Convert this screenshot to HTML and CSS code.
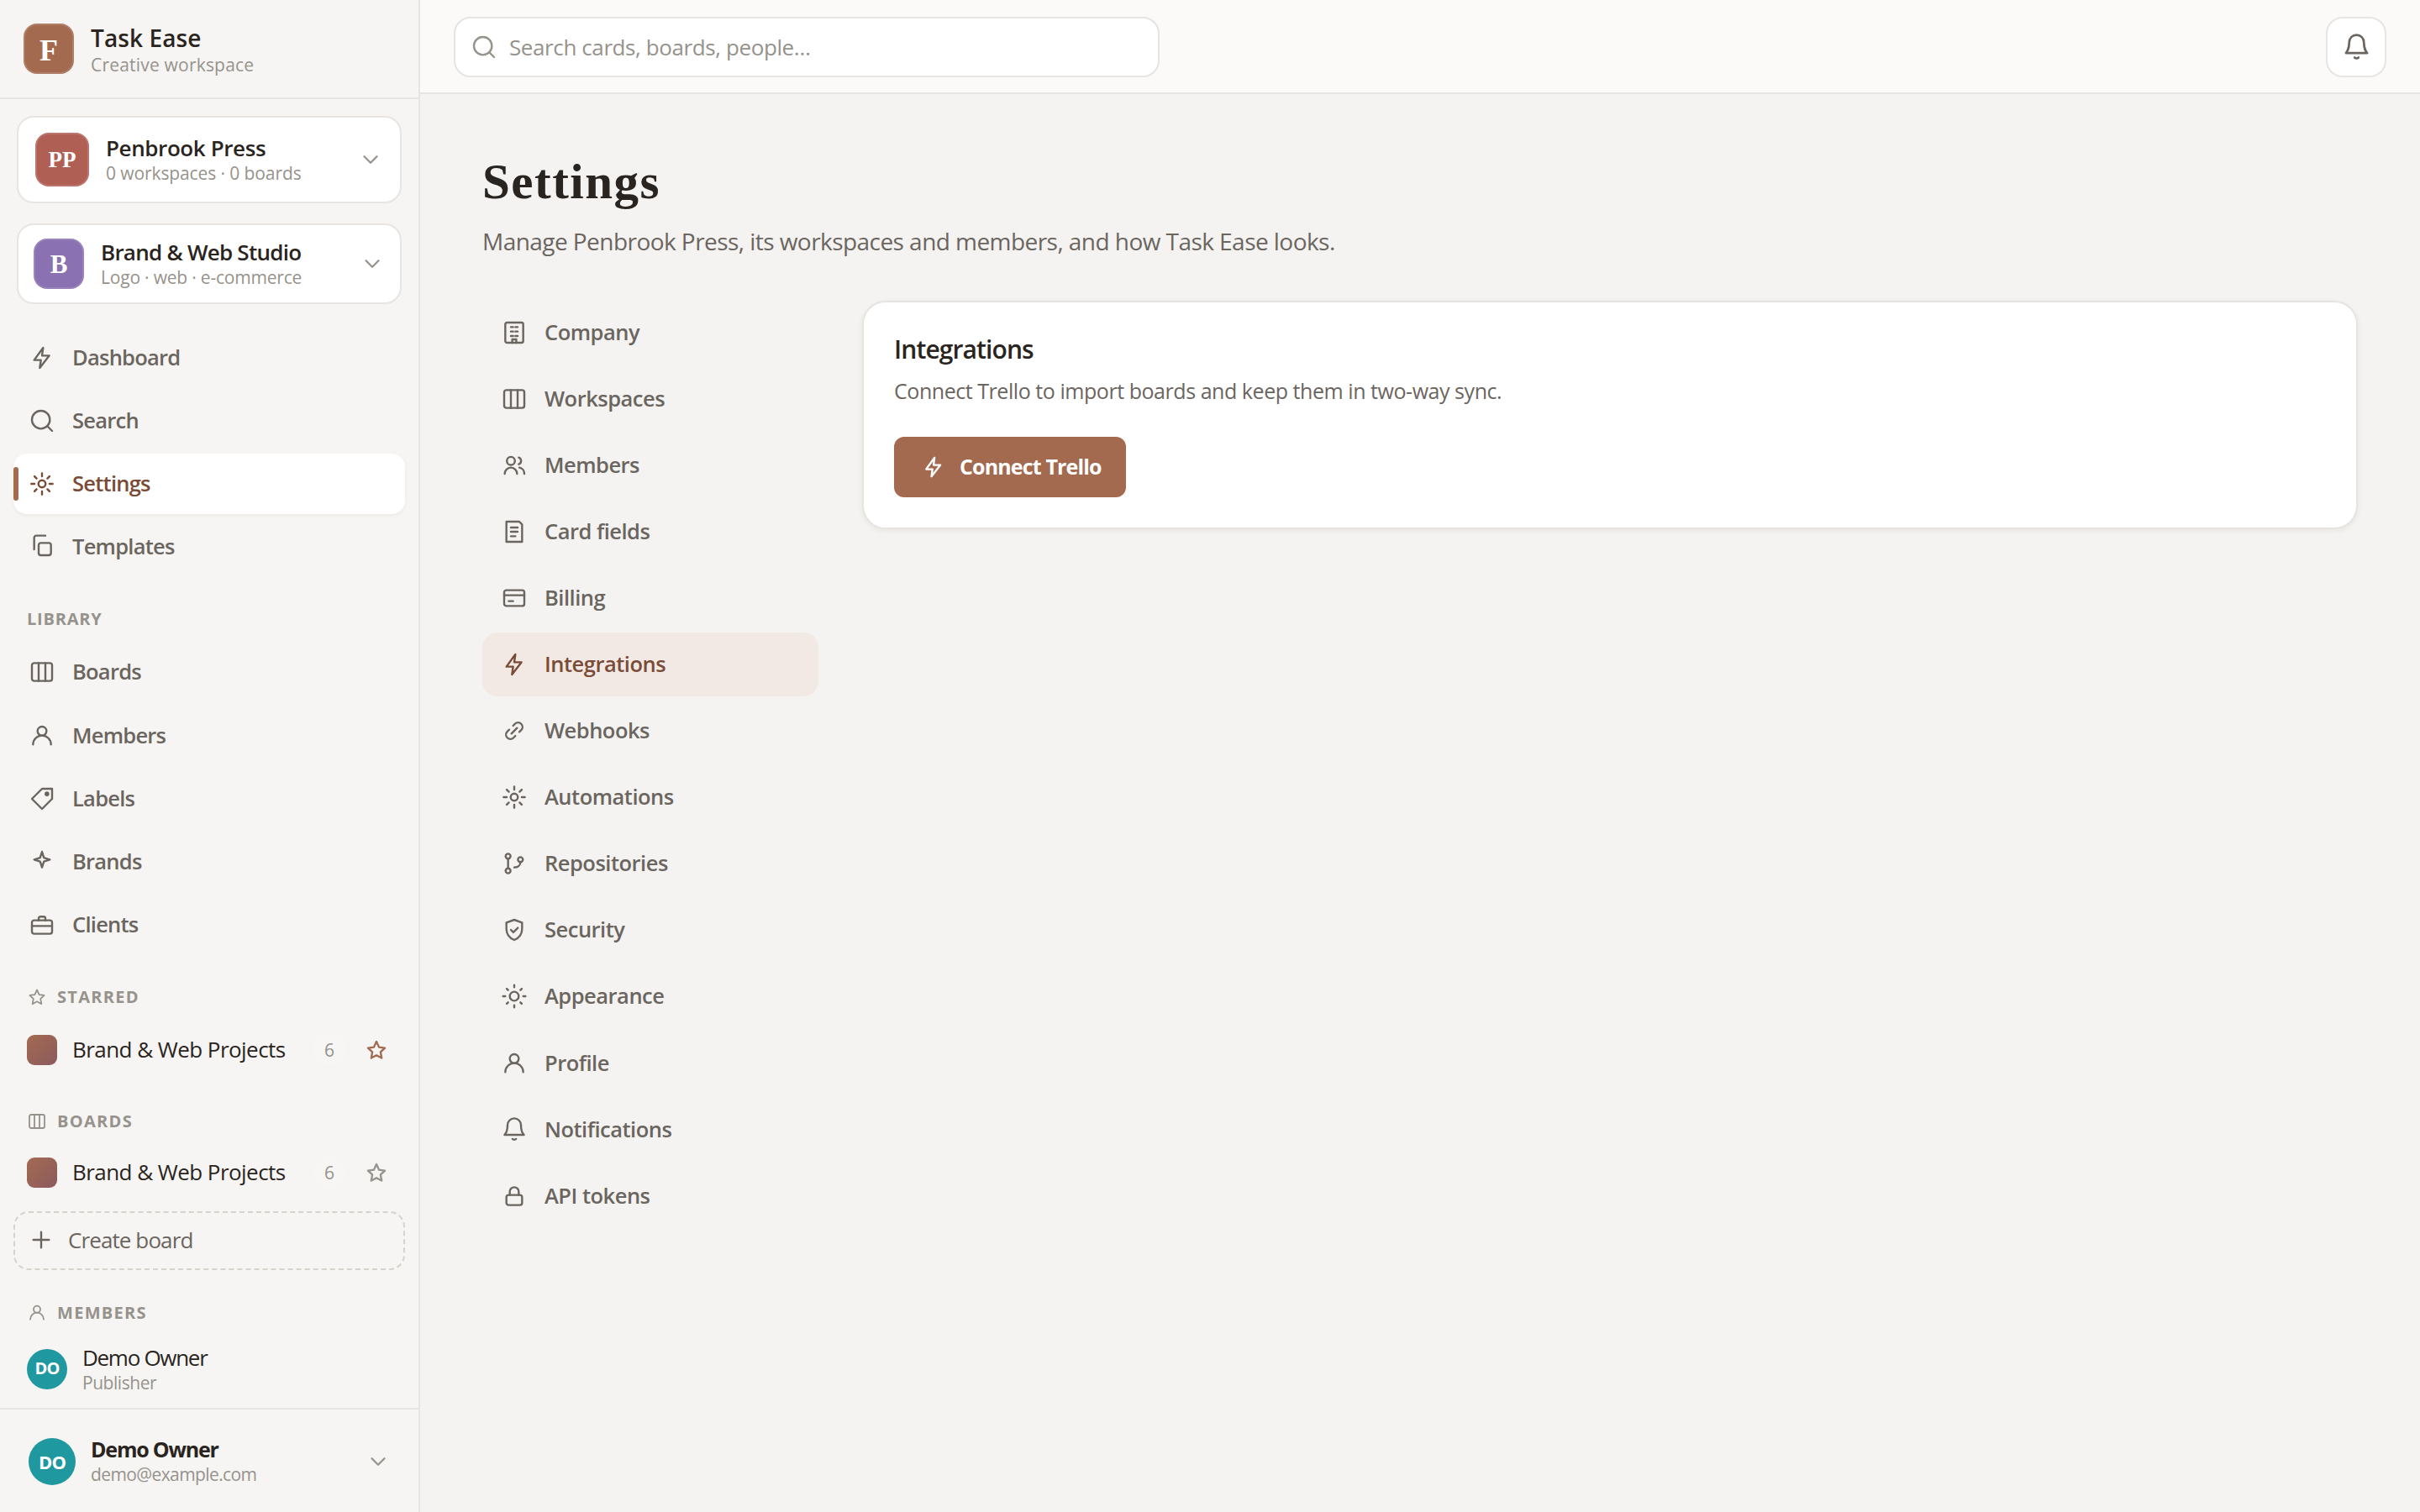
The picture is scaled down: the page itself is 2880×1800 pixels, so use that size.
FILE: index.html
```html
<!DOCTYPE html>
<html lang="en">
<head>
  <meta charset="UTF-8">
  <title>Settings - Task Ease</title>
  <link rel="stylesheet" href="styles.css">
</head>
<body>
  <svg class="sprite">
    <symbol id="bolt" viewBox="0 0 24 24"><path d="M13 3L5 14h6l-1 7 8.5-11H12z"/></symbol>
    <symbol id="search" viewBox="0 0 24 24"><circle cx="11" cy="11" r="8"/><path d="M21 21l-4.3-4.3"/></symbol>
    <symbol id="gear" viewBox="0 0 24 24"><circle cx="12" cy="12" r="3.2"/><path d="M12 2.5v2.8M12 18.7v2.8M2.5 12h2.8M18.7 12h2.8M5.3 5.3l1.9 1.9M16.8 16.8l1.9 1.9M18.7 5.3l-1.9 1.9M7.2 16.8l-1.9 1.9"/></symbol>
    <symbol id="copy" viewBox="0 0 24 24"><rect x="9" y="8.5" width="11" height="11" rx="2"/><path d="M5 14.3V4a2 2 0 0 1 2-2h8"/></symbol>
    <symbol id="board" viewBox="0 0 24 24"><rect x="3" y="4" width="18" height="16" rx="2"/><path d="M9 4v16M15 4v16"/></symbol>
    <symbol id="user" viewBox="0 0 24 24"><circle cx="12" cy="7.7" r="4"/><path d="M4 19.7a8 8 0 0 1 16 0"/></symbol>
    <symbol id="users" viewBox="0 0 24 24"><circle cx="9" cy="8" r="3.6"/><path d="M3.5 19.5a5.5 5.5 0 0 1 11 0M16 5a3.2 3.2 0 0 1 0 6M16.6 14a5.5 5.5 0 0 1 4.4 5.5"/></symbol>
    <symbol id="tag" viewBox="0 0 24 24"><path d="M12 3h9v9l-9 9-9-9z"/><circle cx="16.4" cy="7.6" r="1.2" fill="currentColor"/></symbol>
    <symbol id="sparkle" viewBox="0 0 24 24"><path d="M12 3l1.7 5.3L19 10l-5.3 1.7L12 17l-1.7-5.3L5 10l5.3-1.7z"/></symbol>
    <symbol id="briefcase" viewBox="0 0 24 24"><rect x="3" y="8" width="18" height="12" rx="2"/><path d="M9 8V6.2a1.5 1.5 0 0 1 1.5-1.5h3A1.5 1.5 0 0 1 15 6.200V8M3 13h18"/></symbol>
    <symbol id="star" viewBox="0 0 24 24"><path d="M12 3.500l2.600 5.600 6 .800-4.400 4.200 1.100 6.100L12 17.300l-5.300 2.900 1.100-6.100L3.400 9.900l6-.800z"/></symbol>
    <symbol id="plus" viewBox="0 0 24 24"><path d="M12 5v14M5 12h14"/></symbol>
    <symbol id="chevron" viewBox="0 0 24 24"><path d="M6 9l6 6 6-6"/></symbol>
    <symbol id="bell" viewBox="0 0 24 24"><path d="M6 7.800a6 6 0 0 1 12 0c0 6 2.700 8.700 2.700 8.700H3.300S6 13.800 6 7.800zM10.400 20.200a2 1.500 0 0 0 3.200 0"/></symbol>
    <symbol id="building" viewBox="0 0 24 24"><rect x="4" y="3" width="16" height="18" rx="1.500"/><path d="M9 7h2M13 7h2M9 11h2M13 11h2M9 15h2M13 15h2M10.200 21v-3h3.600v3"/></symbol>
    <symbol id="form" viewBox="0 0 24 24"><path d="M5 3h11.500L19 5.500V21H5zM9 8.200h6M9 12h6M9 16h4"/></symbol>
    <symbol id="credit" viewBox="0 0 24 24"><rect x="3" y="5" width="18" height="14" rx="2"/><path d="M3 9.500h18M7 14.700h4"/></symbol>
    <symbol id="link" viewBox="0 0 24 24"><path d="M9.500 14.500l5-5M11 7.500l1.600-1.700a3.900 3.900 0 0 1 5.600 5.600L16.500 13M7.500 11l-1.700 1.600a3.900 3.900 0 0 0 5.600 5.600L13 16.500"/></symbol>
    <symbol id="branch" viewBox="0 0 24 24"><circle cx="6.500" cy="5.500" r="2.200"/><circle cx="6.500" cy="18.500" r="2.200"/><circle cx="17.500" cy="8.500" r="2.200"/><path d="M6.500 7.700v8.600M17.500 10.700c0 3-2.500 4.800-5.500 4.800"/></symbol>
    <symbol id="shield" viewBox="0 0 24 24"><path d="M12 3l7 2.500V11c0 4.800-2.800 8.200-7 10-4.200-1.800-7-5.200-7-10V5.500zM9 12l2.200 2.200 4-4"/></symbol>
    <symbol id="sun" viewBox="0 0 24 24"><circle cx="12" cy="12" r="4"/><path d="M12 2v2M12 20v2M2 12h2M20 12h2M5.300 5.300l1.200 1.200M17.500 17.500l1.200 1.200M18.700 5.300l-1.200 1.200M6.500 17.500l-1.200 1.200"/></symbol>
    <symbol id="lock" viewBox="0 0 24 24"><rect x="5" y="11" width="14" height="9" rx="2"/><path d="M8 11V8a4 4 0 0 1 8 0v3"/></symbol>
  </svg>

  <div class="app">
    <aside class="sidebar">
      <div class="brand">
        <span class="logo">F</span>
        <div class="stack">
          <span class="brand-name">Task Ease</span>
          <span class="brand-sub">Creative workspace</span>
        </div>
      </div>

      <button class="switcher company">
        <span class="logo red">PP</span>
        <span class="stack">
          <span class="name">Penbrook Press</span>
          <span class="sub">0 workspaces · 0 boards</span>
        </span>
        <svg class="icon chev"><use href="#chevron"/></svg>
      </button>
      <button class="switcher studio">
        <span class="logo purple">B</span>
        <span class="stack">
          <span class="name">Brand &amp; Web Studio</span>
          <span class="sub">Logo · web · e-commerce</span>
        </span>
        <svg class="icon chev"><use href="#chevron"/></svg>
      </button>

      <nav class="nav">
        <a class="nav-item"><svg class="icon"><use href="#bolt"/></svg><span>Dashboard</span></a>
        <a class="nav-item"><svg class="icon"><use href="#search"/></svg><span>Search</span></a>
        <a class="nav-item active"><svg class="icon"><use href="#gear"/></svg><span>Settings</span></a>
        <a class="nav-item"><svg class="icon"><use href="#copy"/></svg><span>Templates</span></a>
      </nav>

      <div class="heading library">LIBRARY</div>
      <nav class="nav">
        <a class="nav-item"><svg class="icon"><use href="#board"/></svg><span>Boards</span></a>
        <a class="nav-item"><svg class="icon"><use href="#user"/></svg><span>Members</span></a>
        <a class="nav-item"><svg class="icon"><use href="#tag"/></svg><span>Labels</span></a>
        <a class="nav-item"><svg class="icon"><use href="#sparkle"/></svg><span>Brands</span></a>
        <a class="nav-item"><svg class="icon"><use href="#briefcase"/></svg><span>Clients</span></a>
      </nav>

      <div class="heading starred"><svg class="icon"><use href="#star"/></svg>STARRED</div>
      <div class="board-row">
        <span class="swatch"></span>
        <span class="board-name">Brand &amp; Web Projects</span>
        <span class="count">6</span>
        <svg class="icon star on"><use href="#star"/></svg>
      </div>

      <div class="heading boards"><svg class="icon"><use href="#board"/></svg>BOARDS</div>
      <div class="board-row">
        <span class="swatch"></span>
        <span class="board-name">Brand &amp; Web Projects</span>
        <span class="count">6</span>
        <svg class="icon star"><use href="#star"/></svg>
      </div>
      <button class="create"><svg class="icon"><use href="#plus"/></svg><span>Create board</span></button>

      <div class="heading members"><svg class="icon"><use href="#user"/></svg>MEMBERS</div>
      <div class="member">
        <span class="avatar">DO</span>
        <div class="stack">
          <span class="member-name">Demo Owner</span>
          <span class="sub">Publisher</span>
        </div>
      </div>

      <div class="account">
        <span class="avatar large">DO</span>
        <div class="stack">
          <span class="name">Demo Owner</span>
          <span class="sub">demo@example.com</span>
        </div>
        <svg class="icon chev"><use href="#chevron"/></svg>
      </div>
    </aside>

    <div class="main">
      <header class="topbar">
        <div class="search"><svg class="icon"><use href="#search"/></svg><span>Search cards, boards, people…</span></div>
        <button class="bell"><svg class="icon"><use href="#bell"/></svg></button>
      </header>

      <main class="page">
        <h1>Settings</h1>
        <p class="lead">Manage Penbrook Press, its workspaces and members, and how Task Ease looks.</p>

        <div class="layout">
          <nav class="tabs">
            <a class="tab"><svg class="icon"><use href="#building"/></svg><span>Company</span></a>
            <a class="tab"><svg class="icon"><use href="#board"/></svg><span>Workspaces</span></a>
            <a class="tab"><svg class="icon"><use href="#users"/></svg><span>Members</span></a>
            <a class="tab"><svg class="icon"><use href="#form"/></svg><span>Card fields</span></a>
            <a class="tab"><svg class="icon"><use href="#credit"/></svg><span>Billing</span></a>
            <a class="tab active"><svg class="icon"><use href="#bolt"/></svg><span>Integrations</span></a>
            <a class="tab"><svg class="icon"><use href="#link"/></svg><span>Webhooks</span></a>
            <a class="tab"><svg class="icon"><use href="#gear"/></svg><span>Automations</span></a>
            <a class="tab"><svg class="icon"><use href="#branch"/></svg><span>Repositories</span></a>
            <a class="tab"><svg class="icon"><use href="#shield"/></svg><span>Security</span></a>
            <a class="tab"><svg class="icon"><use href="#sun"/></svg><span>Appearance</span></a>
            <a class="tab"><svg class="icon"><use href="#user"/></svg><span>Profile</span></a>
            <a class="tab"><svg class="icon"><use href="#bell"/></svg><span>Notifications</span></a>
            <a class="tab"><svg class="icon"><use href="#lock"/></svg><span>API tokens</span></a>
          </nav>

          <section class="card">
            <h2>Integrations</h2>
            <p>Connect Trello to import boards and keep them in two-way sync.</p>
            <button class="connect"><svg class="icon"><use href="#bolt"/></svg><span>Connect Trello</span></button>
          </section>
        </div>
      </main>
    </div>
  </div>
</body>
</html>
```
FILE: styles.css
```css
* {
  box-sizing: border-box;
}
body {
  margin: 0;
  font-family: "Open Sans", sans-serif;
  font-size: 26px;
  color: #292420;
  background: #f4f3f1;
}
button {
  font: inherit;
  color: inherit;
  text-align: left;
  margin: 0;
}
h1, h2, p {
  margin: 0;
}
.sprite {
  display: none;
}
.icon {
  width: 32px;
  height: 32px;
  flex: none;
  fill: none;
  stroke: currentColor;
  stroke-width: 1.8;
  stroke-linecap: round;
  stroke-linejoin: round;
}
.app {
  display: flex;
  height: 1800px;
}
.stack {
  display: flex;
  flex-direction: column;
  align-items: flex-start;
  white-space: nowrap;
}

/* sidebar */
.sidebar {
  width: 500px;
  flex: none;
  display: flex;
  flex-direction: column;
  background: #f6f5f3;
  border-right: 2px solid #e6e4e1;
}
.brand {
  height: 118px;
  padding: 0 28px;
  display: flex;
  align-items: center;
  gap: 20px;
  border-bottom: 2px solid #e6e4e1;
}
.logo {
  width: 60px;
  height: 60px;
  flex: none;
  display: flex;
  align-items: center;
  justify-content: center;
  border-radius: 16px;
  background: #a36a50;
  box-shadow: inset 0 0 0 2px rgba(255, 255, 255, 0.14);
  color: #fff;
  font: bold 36px/1 "Liberation Serif", serif;
  padding-top: 3px;
}
.logo.red {
  width: 64px;
  height: 64px;
  padding-top: 0;
  background: #b05f55;
  font-size: 27px;
}
.logo.purple {
  padding-top: 0;
  background: #8971b2;
  font-size: 31px;
}
.brand .stack {
  padding-top: 2px;
}
.brand-name {
  font-size: 28px;
  font-weight: 650;
  line-height: 36px;
  letter-spacing: 0.1px;
}
.brand-sub {
  font-size: 21px;
  line-height: 28px;
  letter-spacing: 0.2px;
  color: #96928c;
}
.name {
  font-weight: 600;
  line-height: 32px;
  letter-spacing: -0.4px;
}
.sub {
  font-size: 21px;
  line-height: 28px;
  letter-spacing: -0.1px;
  color: #96928c;
}
.switcher {
  width: 458px;
  margin-left: 20px;
  display: flex;
  align-items: center;
  gap: 20px;
  background: #fff;
  border: 2px solid #e8e4e1;
  border-radius: 20px;
}
.switcher .chev {
  margin-left: auto;
}
.company {
  height: 104px;
  margin-top: 20px;
  padding: 0 20px;
}
.studio {
  height: 96px;
  margin-top: 24px;
  padding: 0 18px;
}
.studio .name {
  letter-spacing: -0.75px;
}
.studio .sub {
  letter-spacing: -0.2px;
}
.chev {
  width: 30px;
  height: 30px;
  color: #96928c;
}
.nav {
  margin: 28px 16px 0;
  display: flex;
  flex-direction: column;
  gap: 4px;
}
.nav-item {
  height: 71.2px;
  padding: 0 18px;
  display: flex;
  align-items: center;
  gap: 20px;
  border-radius: 16px;
  color: #6b655f;
  font-size: 25.5px;
  font-weight: 600;
  letter-spacing: -0.75px;
}
.nav-item span, .tab span {
  margin-top: -2px;
}
.nav-item.active {
  position: relative;
  background: #fff;
  color: #7a4b37;
  box-shadow: 0 2px 4px rgba(80, 50, 30, 0.06);
}
.nav-item.active::before {
  content: "";
  position: absolute;
  left: 0;
  top: 16px;
  width: 6px;
  height: 40px;
  border-radius: 3px;
  background: #a36a50;
}
.heading {
  height: 28px;
  margin-left: 32px;
  display: flex;
  align-items: center;
  gap: 12px;
  font-size: 20px;
  font-weight: 700;
  letter-spacing: 1.3px;
  color: #96928c;
}
.heading .icon {
  width: 24px;
  height: 24px;
}
.library {
  margin-top: 36px;
  letter-spacing: 0.8px;
}
.library + .nav {
  margin-top: 14px;
}
.starred {
  margin-top: 36px;
}
.board-row {
  height: 72px;
  margin: 13px 16px 0;
  padding: 0 20px 0 16px;
  display: flex;
  align-items: center;
}
.swatch {
  width: 36px;
  height: 36px;
  margin-right: 18px;
  border-radius: 9px;
  background: linear-gradient(135deg, #a36a50, #8c5a5e);
}
.board-name {
  margin-top: -2px;
  white-space: nowrap;
  font-weight: 500;
  letter-spacing: -0.55px;
}
.count {
  width: 40px;
  height: 36px;
  margin-left: auto;
  margin-right: 22px;
  border-radius: 18px;
  background: #f7f6f4;
  text-align: center;
  font-size: 21px;
  line-height: 36px;
  color: #96928c;
}
.star {
  width: 28px;
  height: 28px;
  color: #96928c;
  stroke-width: 2;
}
.star.on {
  color: #a36a50;
}
.boards {
  margin-top: 35px;
}
.boards + .board-row {
  margin-top: 11px;
}
.create {
  width: 466px;
  height: 70px;
  margin: 10px 0 0 16px;
  padding: 0 15px 2px;
  display: flex;
  align-items: center;
  gap: 16px;
  background: none;
  border: 2px dashed #d6d3cc;
  border-radius: 18px;
  color: #6b655f;
  font-weight: 500;
  letter-spacing: -0.9px;
}
.members {
  margin-top: 37px;
}
.member {
  height: 66px;
  margin: 20px 32px 0;
  display: flex;
  align-items: center;
  gap: 18px;
}
.member .sub {
  letter-spacing: -0.45px;
}
.avatar {
  width: 48px;
  height: 48px;
  flex: none;
  display: flex;
  align-items: center;
  justify-content: center;
  border-radius: 50%;
  background: #1f989f;
  color: #fff;
  font-size: 20px;
  line-height: 1;
  font-weight: 700;
  letter-spacing: -0.8px;
  padding-bottom: 1px;
}
.avatar.large {
  width: 56px;
  height: 56px;
  font-size: 22px;
}
.member-name {
  line-height: 32px;
  font-weight: 500;
  letter-spacing: -1.3px;
}
.account {
  height: 124px;
  margin-top: auto;
  padding: 2px 33px 0 34px;
  display: flex;
  align-items: center;
  gap: 18px;
  border-top: 2px solid #e6e4e1;
}
.account .stack {
  padding-bottom: 2px;
}
.account .name {
  font-size: 25px;
  font-weight: 700;
  letter-spacing: -1.2px;
}
.account .sub {
  letter-spacing: -0.6px;
}
.account .chev {
  margin-left: auto;
}

/* main column */
.main {
  flex: 1;
}
.topbar {
  height: 112px;
  padding: 0 40px;
  display: flex;
  align-items: center;
  justify-content: space-between;
  background: #fbfaf8;
  border-bottom: 2px solid #e6e4e1;
}
.search {
  width: 840px;
  height: 72px;
  margin-top: 2px;
  padding: 0 18px;
  display: flex;
  align-items: center;
  gap: 14px;
  background: #fff;
  border: 2px solid #e6e4e1;
  border-radius: 20px;
  color: #96928c;
  letter-spacing: -0.4px;
}
.bell {
  width: 72px;
  height: 72px;
  margin-top: 2px;
  padding: 0;
  display: flex;
  align-items: center;
  justify-content: center;
  background: #fff;
  border: 2px solid #e8e4e1;
  border-radius: 20px;
  color: #6b655f;
}
.bell .icon {
  width: 35px;
  height: 35px;
}
.page {
  padding: 64px 74px;
}
h1 {
  font: bold 59px/80px "Liberation Serif", serif;
  letter-spacing: 1.5px;
}
.lead {
  margin-top: 10px;
  font-size: 28px;
  line-height: 42px;
  letter-spacing: -0.55px;
  color: #6b655f;
}
.layout {
  margin-top: 50px;
  display: flex;
  align-items: flex-start;
  gap: 52px;
}
.tabs {
  width: 400px;
  flex: none;
  display: flex;
  flex-direction: column;
  gap: 4px;
}
.tab {
  height: 75.1px;
  padding: 0 22px;
  display: flex;
  align-items: center;
  gap: 20px;
  border-radius: 18px;
  color: #6b655f;
  font-size: 25.5px;
  font-weight: 600;
  letter-spacing: -0.5px;
}
.tab.active {
  background: #f3e9e4;
  color: #7a4b37;
}
.card {
  flex: 1;
  height: 272px;
  padding: 34px 36px;
  background: #fff;
  border: 2px solid #e6e4e1;
  border-radius: 28px;
  box-shadow: 0 2px 6px rgba(80, 50, 30, 0.07);
}
h2 {
  font-size: 30px;
  font-weight: 650;
  line-height: 44px;
  letter-spacing: -0.9px;
}
.card p {
  margin-top: 7px;
  font-size: 25px;
  line-height: 40px;
  letter-spacing: -0.45px;
  color: #6b655f;
}
.connect {
  width: 276px;
  height: 72px;
  margin-top: 35px;
  padding: 0 32px;
  display: flex;
  align-items: center;
  gap: 18px;
  background: #a36a50;
  border: 0;
  border-radius: 12px;
  color: #fff;
  font-size: 25px;
  font-weight: 700;
  letter-spacing: -0.85px;
  white-space: nowrap;
}
.connect span {
  margin-top: -2px;
}
.connect .icon {
  width: 30px;
  height: 30px;
  margin-right: -2px;
}
```
